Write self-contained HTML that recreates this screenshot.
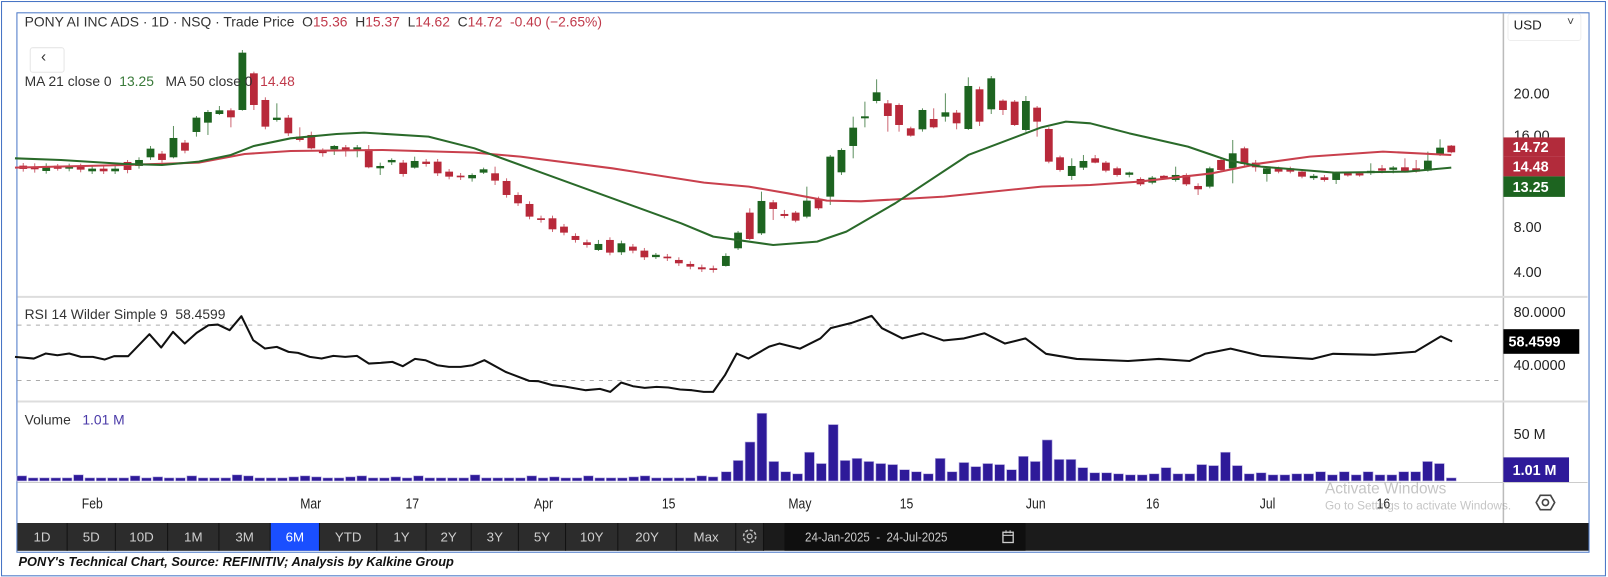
<!DOCTYPE html>
<html><head><meta charset="utf-8"><style>
html,body{margin:0;padding:0;background:#fff;width:1608px;height:577px;overflow:hidden}
#w{position:absolute;left:0;top:0;width:1568px;height:563px;transform:scale(1.02551);transform-origin:0 0;font-family:"Liberation Sans",Arial,sans-serif}
.t{position:absolute;white-space:nowrap}
.ax{position:absolute;font-size:14px;color:#222;left:1476px}
.box{position:absolute;color:#fff;font-size:14px;font-weight:bold;padding-left:9px;box-sizing:border-box}
.dl{position:absolute;top:483px;font-size:14px;color:#222;transform:translateX(-50%) scaleX(0.85)}
.btn{position:absolute;top:510px;height:27px;line-height:27px;text-align:center;color:#cfcfcf;font-size:13px;background:#2c2c2c;border-right:1px solid #111}
</style></head><body><div id="w">
<div style="position:absolute;left:1px;top:1px;width:1563px;height:559px;border:1.5px solid #4472c4"></div>
<div style="position:absolute;left:16px;top:12px;width:1532px;height:525px;border:1px solid #4a78c8;background:#fff"></div>
<svg id="s" width="1568" height="563" style="position:absolute;left:0;top:0">
<line x1="1466" y1="13" x2="1466" y2="510" stroke="#bbb" stroke-width="1.5"/>
<line x1="17" y1="289.5" x2="1548" y2="289.5" stroke="#ddd" stroke-width="2"/>
<line x1="17" y1="391.5" x2="1548" y2="391.5" stroke="#ddd" stroke-width="2"/>
<line x1="17" y1="470.5" x2="1548" y2="470.5" stroke="#ccc" stroke-width="1"/>
<line x1="17" y1="317" x2="1466" y2="317" stroke="#aaa" stroke-dasharray="4,5"/>
<line x1="17" y1="371" x2="1466" y2="371" stroke="#aaa" stroke-dasharray="4,5"/>
<g id="g"></g>
</svg>
<div class="t" style="left:24px;top:14px;font-size:13.5px;color:#333">PONY AI INC ADS · 1D · NSQ · Trade Price&nbsp; O<span style="color:#c0394a">15.36</span>&nbsp; H<span style="color:#c0394a">15.37</span>&nbsp; L<span style="color:#c0394a">14.62</span>&nbsp; C<span style="color:#c0394a">14.72</span>&nbsp; <span style="color:#c0394a">-0.40 (−2.65%)</span></div>
<div style="position:absolute;left:29px;top:46px;width:32px;height:23px;border:1px solid #e6e6e6;border-radius:3px;background:rgba(255,255,255,.8)"></div>
<div class="t" style="left:40px;top:47px;font-size:15px;color:#333">‹</div>
<div class="t" style="left:24px;top:72px;font-size:13.5px;color:#333">MA 21 close 0&nbsp; <span style="color:#3a7a3a">13.25</span>&nbsp;&nbsp; MA 50 close 0&nbsp; <span style="color:#c0394a">14.48</span></div>
<div class="t" style="left:24px;top:299px;font-size:13.5px;color:#333">RSI 14 Wilder Simple 9&nbsp; 58.4599</div>
<div class="t" style="left:24px;top:402px;font-size:13.5px;color:#333">Volume&nbsp;&nbsp; <span style="color:#4a3aa8">1.01 M</span></div>

<div style="position:absolute;left:1470px;top:13px;width:70px;height:25px;border:1px solid #eee;border-radius:3px"></div>
<div class="t" style="left:1476px;top:17px;font-size:13px;color:#222">USD</div>
<div class="t" style="left:1528px;top:14px;font-size:12px;color:#444">˅</div>
<div class="ax" style="top:83px">20.00</div>
<div class="ax" style="top:124px">16.00</div>
<div class="box" style="left:1466px;top:134px;width:60px;height:19px;line-height:19px;background:#b22b3b">14.72</div>
<div class="box" style="left:1466px;top:153px;width:60px;height:19px;line-height:19px;background:#b22b3b">14.48</div>
<div class="box" style="left:1466px;top:172px;width:60px;height:20px;line-height:20px;background:#1d6420">13.25</div>
<div class="ax" style="top:213px">8.00</div>
<div class="ax" style="top:257px">4.00</div>
<div class="ax" style="top:296px">80.0000</div>
<div class="box" style="left:1466px;top:321px;width:74px;height:24px;line-height:24px;background:#000;padding-left:5px">58.4599</div>
<div class="ax" style="top:348px">40.0000</div>
<div class="ax" style="top:415px">50 M</div>
<div class="box" style="left:1466px;top:446px;width:64px;height:24px;line-height:24px;background:#2e1a9a">1.01 M</div>
<svg style="position:absolute;left:1497px;top:480px" width="20" height="20" viewBox="0 0 20 20"><polygon points="5,3 15,3 19,10 15,17 5,17 1,10" fill="none" stroke="#444" stroke-width="1.6"/><circle cx="10" cy="10" r="3" fill="none" stroke="#444" stroke-width="1.6"/></svg>

<div class="dl" style="left:90px">Feb</div><div class="dl" style="left:303px">Mar</div><div class="dl" style="left:402px">17</div><div class="dl" style="left:530px">Apr</div><div class="dl" style="left:652px">15</div><div class="dl" style="left:780px">May</div><div class="dl" style="left:884px">15</div><div class="dl" style="left:1010px">Jun</div><div class="dl" style="left:1124px">16</div><div class="dl" style="left:1236px">Jul</div><div class="dl" style="left:1349px">16</div>
<div class="t" style="left:1292px;top:468px;font-size:15px;color:rgba(150,150,150,.55)">Activate Windows</div>
<div class="t" style="left:1292px;top:488px;font-size:11.5px;color:rgba(150,150,150,.55)">Go to Settings to activate Windows.</div>

<div style="position:absolute;left:17px;top:510px;width:1532px;height:27px;background:#1b1b1b"></div>
<div id="tb"></div>
<div style="position:absolute;left:765px;top:510px;width:235px;height:27px;background:#0f0f0f"></div>
<div class="t" style="left:785px;top:517px;font-size:12.5px;color:#ccc;transform:scaleX(.9);transform-origin:0 0">24-Jan-2025&nbsp; -&nbsp; 24-Jul-2025</div>
<svg style="position:absolute;left:976px;top:516px" width="14" height="14"><rect x="2" y="3" width="10" height="10" fill="none" stroke="#ccc" stroke-width="1.3"/><line x1="2" y1="6" x2="12" y2="6" stroke="#ccc"/><line x1="5" y1="1" x2="5" y2="4" stroke="#ccc"/><line x1="9" y1="1" x2="9" y2="4" stroke="#ccc"/></svg>
<div class="t" style="left:18px;top:541px;font-size:12.5px;font-weight:bold;font-style:italic;color:#111">PONY's Technical Chart, Source: REFINITIV; Analysis by Kalkine Group</div>
</div>
<script>
var tb=document.getElementById('tb');
var L=['1D','5D','10D','1M','3M','6M','YTD','1Y','2Y','3Y','5Y','10Y','20Y','Max',''];
var E=[17,66,113,164,214,264,312,368,416,460,506,552,603,660,718,745];
for(var i=0;i<L.length;i++){var d=document.createElement('div');d.className='btn';d.style.left=E[i]+'px';d.style.width=(E[i+1]-E[i]-1)+'px';d.textContent=L[i];if(L[i]=='6M'){d.style.background='#1a4fff';d.style.color='#fff'}tb.appendChild(d);}
var gd=document.createElementNS('http://www.w3.org/2000/svg','svg');gd.setAttribute('width','16');gd.setAttribute('height','16');gd.style.cssText='position:absolute;left:723px;top:515px';gd.innerHTML='<circle cx="8" cy="8" r="6" fill="none" stroke="#bbb" stroke-width="1.5" stroke-dasharray="3,1.7"/><circle cx="8" cy="8" r="2.3" fill="none" stroke="#bbb" stroke-width="1.3"/>';tb.appendChild(gd);
var g=document.getElementById('g'),NS='http://www.w3.org/2000/svg';
function el(t,a){var e=document.createElementNS(NS,t);for(var k in a)e.setAttribute(k,a[k]);g.appendChild(e);return e;}
var GR='#1d6420',RD='#b8293a';
function cand(x,t,b,c,wt,wb){var col=c=='g'?GR:RD;if(b-t<1.5){t-=0.8;b+=0.8;}
el('line',{x1:x,x2:x,y1:wt,y2:wb,stroke:col,'stroke-width':1,opacity:.7});
el('rect',{x:x-3.8,y:t,width:7.6,height:b-t,fill:col});}
var A=[[18,377,387,'r'],[43,382,388,'r',370,398],[68,378,393,'g'],[93,380,384,'r'],[118,379,386,'g'],[143,379,389,'r'],[168,386,394,'g'],[193,386,394,'r'],[218,386,394,'g'],[245,366,390,'r',360,400],[270,360,378,'g'],[295,326,352,'g'],[320,341,360,'r'],[345,294,352,'g',258,355],[370,308,332,'r'],[395,233,276,'g',228,290],[420,216,248,'g',210,285],[445,211,222,'g',198,225],[470,211,232,'r',205,262],[495,38,210,'g',30,212],[520,100,195,'r',95,210],[545,180,260,'r'],[570,233,240,'g',190,245],[595,233,280,'r'],[620,290,300,'r',262,305],[645,285,325,'r',275,328],[670,335,337,'r',325,350],[695,318,328,'g',315,345],[720,322,330,'r',315,350],[745,322,332,'g',315,352],[770,328,382,'r',315,385],[795,378,385,'g',368,405],[820,360,367,'g',355,375],[845,368,402,'r'],[870,363,383,'g',350,386],[895,365,372,'r'],[920,365,400,'r'],[945,395,410,'r'],[970,407,412,'r'],[995,405,415,'g',400,425],[1020,388,398,'g',383,402],[1045,400,422,'r',380,435],[1070,423,465,'r'],[1095,465,490,'r'],[1120,492,530,'r'],[1145,535,540,'r'],[1170,535,568,'r'],[1195,560,578,'r'],[1220,588,600,'r'],[1245,607,615,'r'],[1270,612,630,'g',600,633],[1295,600,638,'r'],[1320,610,637,'g'],[1345,620,632,'r'],[1370,632,652,'r'],[1395,647,649,'g'],[1420,650,655,'r'],[1445,660,670,'r'],[1470,672,680,'r'],[1495,682,688,'r'],[1520,685,690,'r']];
A.forEach(function(c){var y=function(v){return 39+v/3.077};cand(14.6+0.448*c[0],y(c[1]),y(c[2]),c[3],y(c[4]||c[1]-8),y(c[5]||c[2]+8));});
var B=[[53,648,678,'g',640,680],[78,578,625,'g'],[102,518,597,'r',505,600],[126,483,580,'g',455,585],[150,487,507,'r',480,540],[173,522,528,'r',510,535],[196,518,542,'r'],[219,482,530,'g',440,535],[243,477,505,'r',470,510],[267,350,470,'g',345,495],[290,330,397,'g',325,405],[314,263,318,'g',230,355],[338,229,235,'g',185,262],[362,157,183,'g',118,190],[385,190,228,'r',180,275],[408,195,255,'r',190,275],[432,265,287,'r',260,290],[456,210,268,'g',205,275],[479,237,262,'r',205,265],[503,217,230,'g',160,245],[526,218,250,'r',210,268],[550,138,267,'g',112,270],[573,148,245,'r',140,258],[597,115,208,'g',108,222],[621,182,210,'r',178,225],[645,185,255,'r',180,258],[668,183,270,'g',168,275],[691,203,245,'r',198,290],[715,267,365,'r'],[738,352,390,'r'],[762,378,408,'g',355,420],[786,363,383,'g',345,390],[810,355,368,'r',345,370],[832,368,392,'r'],[855,385,405,'r'],[880,400,402,'g',395,412],[903,417,433,'r'],[927,413,428,'g'],[951,410,412,'r',405,418],[975,405,420,'g',380,425],[997,405,433,'r'],[1021,438,448,'r',430,465],[1045,385,440,'g'],[1068,360,390,'r'],[1092,340,385,'g',300,430],[1116,325,372,'r'],[1139,368,382,'r',360,395],[1162,385,402,'g',380,425],[1186,385,395,'r'],[1210,385,395,'r'],[1234,395,410,'r',388,415],[1258,410,412,'g',402,420],[1280,412,420,'r',405,425],[1304,400,420,'g',395,432],[1328,402,404,'r',398,410],[1352,402,404,'r',398,410],[1375,395,397,'g',370,405],[1398,385,392,'r',375,400],[1421,385,387,'g',378,400],[1445,382,393,'r',355,398],[1468,385,395,'r',360,398],[1492,362,392,'g',335,395],[1517,323,343,'g',298,348],[1540,317,337,'r',315,340]];
B.forEach(function(c){var y=function(v){return 39+v/3.077};cand(682.6+0.4757*c[0],y(c[1]),y(c[2]),c[3],y(c[4]||c[1]-5),y(c[5]||c[2]+5));});
function pl(pts,col,w){el('polyline',{points:pts.map(function(p){return p[0]+','+p[1]}).join(' '),fill:'none',stroke:col,'stroke-width':w,'stroke-linejoin':'round'});}
var f4=function(v){return 14.6+0.448*v},f5=function(v){return 682.6+0.4757*v},fy=function(v){return 39+v/3.077};
var gr=[[0,355],[100,360],[240,372],[320,375],[400,365],[470,345],[520,318],[600,295],[700,282],[760,278],[900,290],[1000,325],[1050,350],[1150,400],[1300,475],[1450,550],[1520,590]].map(function(p){return [f4(p[0]),fy(p[1])]}).concat([[150,615],[240,605],[300,575],[400,490],[550,345],[700,262],[750,245],[800,250],[880,280],[1000,320],[1080,360],[1150,380],[1300,398],[1450,395],[1540,383]].map(function(p){return [f5(p[0]),fy(p[1])]}));
var rd=[[0,383],[240,375],[400,368],[500,342],[600,333],[800,330],[1000,338],[1100,350],[1300,385],[1500,428]].map(function(p){return [f4(p[0]),fy(p[1])]}).concat([[100,440],[180,460],[260,482],[330,484],[500,470],[700,440],[800,435],[900,425],[1050,400],[1150,370],[1250,350],[1400,335],[1540,345]].map(function(p){return [f5(p[0]),fy(p[1])]}));
pl(rd,'#c9404d',2);pl(gr,'#2a6a2a',2);
var rs=[[0,200],[40,205],[65,190],[90,195],[115,190],[140,200],[165,200],[190,208],[210,198],[240,198],[285,132],[310,172],[335,125],[360,160],[385,128],[410,105],[430,103],[455,120],[480,78],[505,150],[530,175],[555,170],[580,185],[600,188],[625,200],[650,205],[675,197],[700,200],[725,197],[750,220],[775,218],[800,215],[822,228],[848,206],[870,210],[895,225],[920,230],[945,230],[970,225],[995,210],[1040,245],[1090,272],[1110,273],[1140,285],[1165,289],[1210,300],[1240,296],[1262,305],[1285,277],[1310,288],[1335,293],[1360,290],[1385,292],[1410,298],[1435,300],[1460,305],[1480,305],[1505,255],[1530,190],[1555,205]].map(function(p){return [14.6+0.46*p[0],283+p[1]/3.077]}).concat([[750,338],[760,335],[780,340],[800,330],[810,320],[830,315],[850,308],[860,320],[880,330],[900,325],[920,332],[940,330],[960,325],[980,335],[1000,330],[1020,345],[1050,350],[1100,352],[1130,350],[1160,352],[1175,345],[1200,340],[1230,347],[1280,350],[1300,345],[1340,346],[1380,343],[1405,328],[1416,333]]);
pl(rs,'#111',2);
var vh=[9,20,38,66,19,9,7,28,17,55,20,22,19,17,16,11,9,7,22,9,18,14,17,16,11,24,19,40,21,21,13,8,8,7,6,6,7,13,7,7,16,15,28,15,7,8,6,6,7,7,9,6,9,6,9,6,6,9,9,19,17,3];
var VC='#2e1a99';
for(var i=0;i<62;i++){var h=3+((i*7)%5==0?2:0)+((i*3)%7==1?1:0);if(i==19)h=6;if(i==24)h=4;if(i==29)h=4;el('rect',{x:21+i*11.05-4.5,y:469-h,width:9.5,height:h,fill:VC,stroke:'#b8b0e0','stroke-width':.6});}
var vx=708,st=(1415-708)/(vh.length-1);
vh.forEach(function(h,k){el('rect',{x:vx+k*st-4.6,y:469-h,width:9.6,height:h,fill:VC,stroke:'#b8b0e0','stroke-width':.6});});
</script>
</body></html>
